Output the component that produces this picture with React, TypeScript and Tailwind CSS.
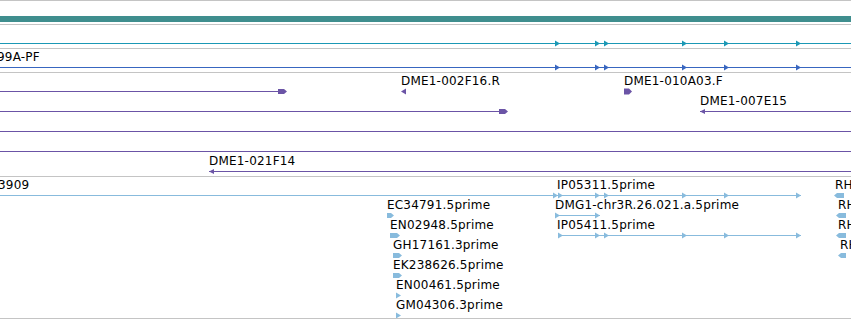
import React from "react";

type Dir = "r" | "l";
type Kind = "tri" | "pent";
type ArrowT = { x: number; w: number; h: number; dir: Dir; kind: Kind };
type LineT = { x: number; w: number };
type LabelT = { x: number; text: string };
type RowT = { lines?: LineT[]; arrows?: ArrowT[]; labels?: LabelT[] };

function Arrow({ a, color }: { a: ArrowT; color: string }) {
  const cy = 3.5;
  const top = cy - a.h / 2;
  const bot = cy + a.h / 2;
  const w = a.w;
  let pts = "";
  if (a.kind === "tri") {
    pts = a.dir === "r" ? `0,${top} ${w},${cy} 0,${bot}` : `${w},${top} 0,${cy} ${w},${bot}`;
  } else {
    const n = Math.min(3, w - 2);
    pts =
      a.dir === "r"
        ? `0,${top} ${w - n},${top} ${w},${cy} ${w - n},${bot} 0,${bot}`
        : `${w},${top} ${n},${top} 0,${cy} ${n},${bot} ${w},${bot}`;
  }
  return (
    <svg className="absolute top-[14px]" style={{ left: a.x }} width={w} height={7} viewBox={`0 0 ${w} 7`}>
      <polygon points={pts} fill={color} />
    </svg>
  );
}

function Row({ row, color }: { row: RowT; color: string }) {
  return (
    <div className="relative h-[20px] shrink-0">
      {(row.labels || []).map((lb, i) => (
        <span
          key={"t" + i}
          className="absolute top-0 whitespace-nowrap text-[12px] leading-[14px] tracking-[0.2px] text-black"
          style={{ left: lb.x }}
        >
          {lb.text}
        </span>
      ))}
      {(row.lines || []).map((l, i) => (
        <div
          key={"l" + i}
          className="absolute top-[17px] h-px"
          style={{ left: l.x, width: l.w, backgroundColor: color }}
        />
      ))}
      {(row.arrows || []).map((a, i) => (
        <Arrow key={"a" + i} a={a} color={color} />
      ))}
    </div>
  );
}

function Track({ h, color, rows }: { h: string; color: string; rows: RowT[] }) {
  return (
    <div className={`flex flex-col overflow-hidden border-b border-[#c4c4c4] pt-px ${h}`}>
      {rows.map((r, i) => (
        <Row key={i} row={r} color={color} />
      ))}
    </div>
  );
}

const exonXs = [555, 595, 604, 682, 724, 796];
const rt = (x: number, w = 5, h = 6): ArrowT => ({ x, w, h, dir: "r", kind: "tri" });
const lt = (x: number, w = 5, h = 6): ArrowT => ({ x, w, h, dir: "l", kind: "tri" });
const rp = (x: number, w: number, h = 5): ArrowT => ({ x, w, h, dir: "r", kind: "pent" });
const lp = (x: number, w: number, h = 5): ArrowT => ({ x, w, h, dir: "l", kind: "pent" });

const purpleRows: RowT[] = [
  {
    lines: [{ x: 0, w: 280 }],
    arrows: [rp(278, 9), lt(401, 5, 6), rp(624, 8, 6)],
    labels: [
      { x: 401, text: "DME1-002F16.R" },
      { x: 624, text: "DME1-010A03.F" },
    ],
  },
  {
    lines: [
      { x: 0, w: 502 },
      { x: 700, w: 151 },
    ],
    arrows: [rp(499, 9), lt(700, 5, 5)],
    labels: [{ x: 700, text: "DME1-007E15" }],
  },
  { lines: [{ x: 0, w: 851 }] },
  { lines: [{ x: 0, w: 851 }] },
  {
    lines: [{ x: 209, w: 642 }],
    arrows: [lt(209, 5, 5)],
    labels: [{ x: 209, text: "DME1-021F14" }],
  },
];

const estRows: RowT[] = [
  {
    lines: [{ x: 0, w: 801 }],
    arrows: [rt(553), rt(558), ...exonXs.slice(1).map((x) => rt(x)), lp(834, 10)],
    labels: [
      { x: -2, text: "3909" },
      { x: 557, text: "IP05311.5prime" },
      { x: 835, text: "RH" },
    ],
  },
  {
    lines: [{ x: 555, w: 45 }],
    arrows: [rp(387, 7), rt(555), rt(595), lp(836, 10)],
    labels: [
      { x: 387, text: "EC34791.5prime" },
      { x: 555, text: "DMG1-chr3R.26.021.a.5prime" },
      { x: 838, text: "RH" },
    ],
  },
  {
    lines: [{ x: 558, w: 243 }],
    arrows: [rp(390, 10), rt(558), ...exonXs.slice(1).map((x) => rt(x)), lp(836, 10)],
    labels: [
      { x: 390, text: "EN02948.5prime" },
      { x: 557, text: "IP05411.5prime" },
      { x: 838, text: "RH" },
    ],
  },
  {
    arrows: [rp(393, 9), lp(838, 8)],
    labels: [
      { x: 393, text: "GH17161.3prime" },
      { x: 840, text: "RH" },
    ],
  },
  { arrows: [rp(393, 9)], labels: [{ x: 393, text: "EK238626.5prime" }] },
  { arrows: [rt(396)], labels: [{ x: 396, text: "EN00461.5prime" }] },
  { arrows: [rt(396)], labels: [{ x: 396, text: "GM04306.3prime" }] },
];

export default function App() {
  return (
    <div className="flex flex-col w-[851px] h-[321px] overflow-hidden bg-white border-t border-[#c4c4c4] font-['DejaVu_Sans',sans-serif]">
      {/* reference sequence bar */}
      <div className="h-[24px] shrink-0 border-b border-[#c4c4c4] pt-[15px]">
        <div className="h-[6px] bg-[#3f8e8e]" />
      </div>

      <Track
        h="h-[24px] shrink-0"
        color="#1b98b5"
        rows={[{ lines: [{ x: 0, w: 851 }], arrows: exonXs.map((x) => rt(x)) }]}
      />

      <Track
        h="h-[24px] shrink-0"
        color="#3866c0"
        rows={[
          {
            lines: [{ x: 0, w: 851 }],
            arrows: exonXs.map((x) => rt(x)),
            labels: [{ x: -3, text: "99A-PF" }],
          },
        ]}
      />

      <Track h="h-[104px] shrink-0" color="#6b54a6" rows={purpleRows} />

      <Track h="h-[142px] shrink-0" color="#88bbdd" rows={estRows} />
    </div>
  );
}
